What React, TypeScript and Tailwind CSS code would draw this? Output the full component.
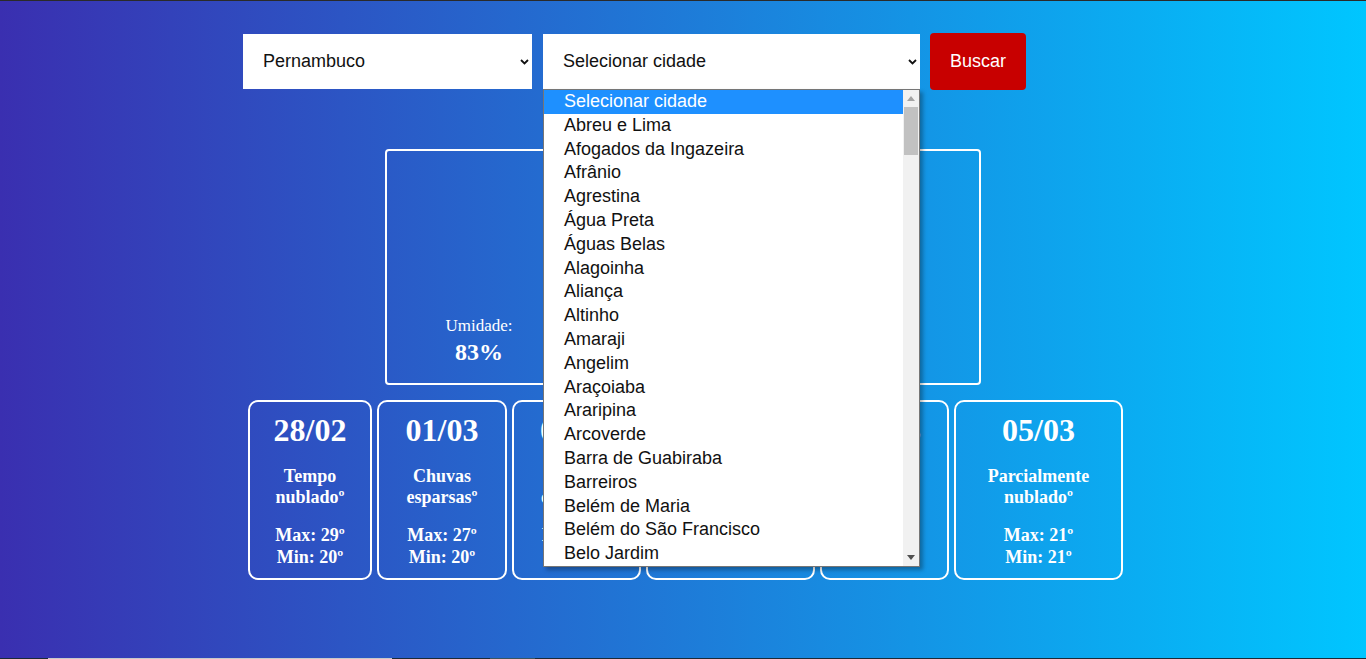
import { useState } from "react";

const cidades = [
  "Selecionar cidade",
  "Abreu e Lima",
  "Afogados da Ingazeira",
  "Afrânio",
  "Agrestina",
  "Água Preta",
  "Águas Belas",
  "Alagoinha",
  "Aliança",
  "Altinho",
  "Amaraji",
  "Angelim",
  "Araçoiaba",
  "Araripina",
  "Arcoverde",
  "Barra de Guabiraba",
  "Barreiros",
  "Belém de Maria",
  "Belém do São Francisco",
  "Belo Jardim",
];

const previsao = [
  { data: "28/02", tempo: "Tempo nublado", max: 29, min: 20, w: "w-[124px]" },
  { data: "01/03", tempo: "Chuvas esparsas", max: 27, min: 20, w: "w-[130px]" },
  { data: "02/03", tempo: "Chuvas esparsas", max: 26, min: 21, w: "w-[129px]" },
  { data: "03/03", tempo: "Parcialmente nublado", max: 28, min: 21, w: "w-[169px]" },
  { data: "04/03", tempo: "Tempo nublado", max: 25, min: 21, w: "w-[129px]" },
  { data: "05/03", tempo: "Parcialmente nublado", max: 21, min: 21, w: "w-[169px]" },
];

function Chevron() {
  return (
    <svg width="9" height="6" viewBox="0 0 9 6" className="shrink-0">
      <path d="M1 1 L4.5 4.5 L8 1" fill="none" stroke="#111" strokeWidth="1.8" />
    </svg>
  );
}

export default function App() {
  const [aberto] = useState(true);

  return (
    <div className="h-[659px] w-full overflow-hidden flex flex-col bg-[linear-gradient(90deg,#3a2fb0_0%,#1e7bd8_50%,#00c6ff_100%)] font-['Liberation_Serif',serif] text-white">
      <div className="h-px bg-[#2a2a2a]" />

      {/* busca */}
      <div className="flex items-center pl-[243px] pt-[32px]">
        <div className="flex h-[55px] w-[289px] items-center justify-between bg-white pl-[20px] pr-[3px] font-['Liberation_Sans',Arial,sans-serif] text-[18px] text-[#111]">
          <span>Pernambuco</span>
          <Chevron />
        </div>
        <div className="relative ml-[11px]">
          <div className="flex h-[55px] w-[377px] items-center justify-between bg-white pl-[20px] pr-[3px] font-['Liberation_Sans',Arial,sans-serif] text-[18px] text-[#111]">
            <span>Selecionar cidade</span>
            <Chevron />
          </div>
          {aberto && (
            <div className="absolute left-0 top-full z-10 flex w-[377px] border border-[#767676] bg-white font-['Liberation_Sans',Arial,sans-serif] text-[18px] text-[#111] shadow-[3px_3px_4px_rgba(0,0,0,0.3)]">
              <ul className="flex-1">
                {cidades.map((c, i) => (
                  <li
                    key={c}
                    className={
                      i === 0
                        ? "h-[23.8px] leading-[23.8px] pl-[20px] bg-[#1e90ff] text-white"
                        : "h-[23.8px] leading-[23.8px] pl-[20px]"
                    }
                  >
                    {c}
                  </li>
                ))}
              </ul>
              <div className="flex w-[16px] flex-col items-center bg-[#f1f1f1]">
                <svg width="8" height="5" viewBox="0 0 8 5" className="mt-[6px]">
                  <path d="M0 5 L4 0 L8 5 Z" fill="#a3a3a3" />
                </svg>
                <div className="mt-[6px] h-[48px] w-[14px] bg-[#c1c1c1]" />
                <div className="flex-1" />
                <svg width="8" height="5" viewBox="0 0 8 5" className="mb-[6px]">
                  <path d="M0 0 L8 0 L4 5 Z" fill="#505050" />
                </svg>
              </div>
            </div>
          )}
        </div>
        <button className="ml-[10px] h-[57px] w-[96px] rounded-[4px] bg-[#c80000] font-['Liberation_Sans',Arial,sans-serif] text-[18px] text-white">
          Buscar
        </button>
      </div>

      {/* tempo atual */}
      <div className="mt-[59px] flex justify-center">
        <div className="flex h-[236px] w-[596px] flex-col items-center rounded-[4px] border-2 border-white">
          <div className="mt-[20px] flex flex-col items-center">
            <h2 className="text-[30px] font-bold leading-[36px]">Recife</h2>
            <p className="text-[48px] font-bold leading-[56px]">28°</p>
            <p className="text-[18px] leading-[22px]">Tempo nublado</p>
          </div>
          <div className="mt-auto mb-[17px] flex w-full justify-between px-[42px]">
            <div className="flex w-[100px] flex-col items-center">
              <span className="text-[17px] leading-[19px]">Umidade:</span>
              <span className="mt-[4px] text-[24px] font-bold leading-[27px]">83%</span>
            </div>
            <div className="flex w-[100px] flex-col items-center">
              <span className="text-[17px] leading-[19px]">Vento:</span>
              <span className="mt-[4px] text-[24px] font-bold leading-[27px]">12 km/h</span>
            </div>
            <div className="flex w-[100px] flex-col items-center">
              <span className="text-[17px] leading-[19px]">Chuva:</span>
              <span className="mt-[4px] text-[24px] font-bold leading-[27px]">40%</span>
            </div>
          </div>
        </div>
      </div>

      {/* previsao */}
      <div className="mt-[15px] flex justify-center gap-[5px] pl-[5px]">
        {previsao.map((p) => (
          <div
            key={p.data}
            className={`${p.w} flex h-[180px] flex-col items-center rounded-[10px] border-2 border-white px-[6px] pt-[10px] text-center font-bold`}
          >
            <p className="text-[32px] leading-[36px]">{p.data}</p>
            <p className="mt-[18px] text-[18px] leading-[21px]">{p.tempo}º</p>
            <p className="mt-[16px] text-[18px] leading-[22px]">Max: {p.max}º</p>
            <p className="text-[18px] leading-[22px]">Min: {p.min}º</p>
          </div>
        ))}
      </div>

      <div className="mt-auto flex h-px">
        <div className="w-[48px] bg-[#1c2a36]" />
        <div className="w-[344px] bg-[#c9c9c9]" />
        <div className="w-[98px] bg-[#1c2a36]" />
        <div className="w-[45px] bg-[#3b5560]" />
        <div className="flex-1 bg-[#1c2a36]" />
      </div>
    </div>
  );
}
